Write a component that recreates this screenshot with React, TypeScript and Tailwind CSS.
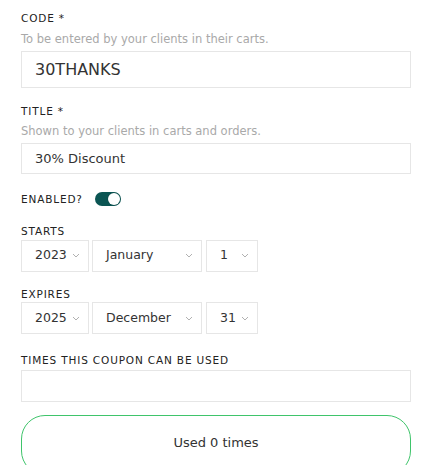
import React, { useState } from 'react';

const font = { fontFamily: '"DejaVu Sans", "Open Sans", sans-serif' };

const Chevron = () => (
  <svg width="8" height="5" viewBox="0 0 8 5" className="shrink-0">
    <path d="M1 1l3 3 3-3" fill="none" stroke="#a8a8a8" strokeWidth="0.9" />
  </svg>
);

const Select = ({ value, width }: { value: string; width: string }) => (
  <div className={`${width} h-[32px] border border-[#e6e6e6] bg-white flex items-center justify-between pl-[13px] pr-[8px] text-[12.5px] text-[#333]`}>
    <span>{value}</span>
    <Chevron />
  </div>
);

const Label = ({ children }: { children: React.ReactNode }) => (
  <div className="text-[10.5px] tracking-[0.08em] text-[#222] uppercase leading-none">{children}</div>
);

const DateRow = ({ year, month, day }: { year: string; month: string; day: string }) => (
  <div className="mt-[3px] flex">
    <Select value={year} width="w-[68px]" />
    <div className="ml-[3px]">
      <Select value={month} width="w-[110px]" />
    </div>
    <div className="ml-[4px]">
      <Select value={day} width="w-[52px]" />
    </div>
  </div>
);

const App: React.FC = () => {
  const [enabled, setEnabled] = useState(true);

  return (
    <div className="w-[431px] h-[465px] bg-white overflow-hidden" style={font}>
      <div className="ml-[21px] pt-[13px] w-[390px]">
        <Label>Code *</Label>
        <div className="mt-[10px] text-[11.5px] text-[#a9a9a9] leading-none">To be entered by your clients in their carts.</div>
        <div className="mt-[6px] h-[37px] border border-[#e6e6e6] flex items-center px-[13px] text-[16px] text-[#333]">30THANKS</div>

        <div className="mt-[18px]">
          <Label>Title *</Label>
        </div>
        <div className="mt-[9px] text-[11.5px] text-[#a9a9a9] leading-none">Shown to your clients in carts and orders.</div>
        <div className="mt-[6px] h-[31px] border border-[#e6e6e6] flex items-center px-[13px] text-[13px] text-[#333]">30% Discount</div>

        <div className="mt-[18px] flex items-center gap-[12px]">
          <Label>Enabled?</Label>
          <button
            onClick={() => setEnabled(!enabled)}
            className={`w-[26px] h-[14px] rounded-full flex items-center px-[1px] ${enabled ? 'bg-[#0b5553] justify-end' : 'bg-gray-300 justify-start'}`}
          >
            <span className="w-[12px] h-[12px] rounded-full bg-white shadow-[0_0_0_0.5px_rgba(0,0,0,0.15)]" />
          </button>
        </div>

        <div className="mt-[20px]">
          <Label>Starts</Label>
        </div>
        <DateRow year="2023" month="January" day="1" />

        <div className="mt-[17px]">
          <Label>Expires</Label>
        </div>
        <DateRow year="2025" month="December" day="31" />

        <div className="mt-[21px]">
          <Label>Times this coupon can be used</Label>
        </div>
        <div className="mt-[4px] h-[32px] border border-[#e6e6e6]" />

        <div className="mt-[13px] h-[60px] border border-[#3fc46b] rounded-[24px] flex justify-center pt-[17px] text-[13px] text-[#333]">
          Used 0 times
        </div>
      </div>
    </div>
  );
};

export default App;
